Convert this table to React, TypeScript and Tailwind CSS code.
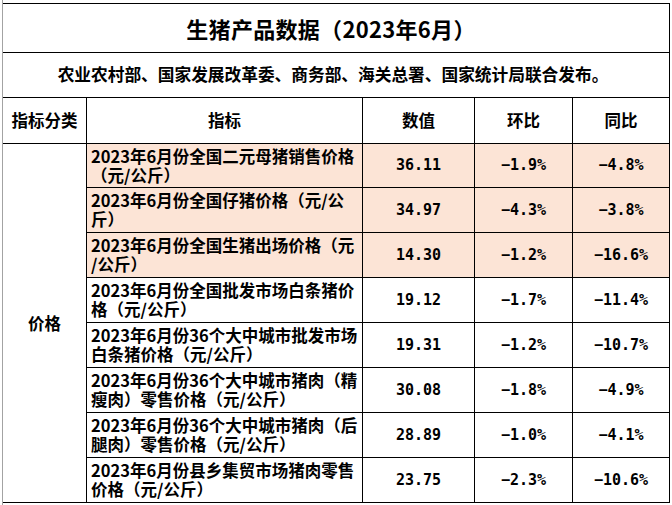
const CN = "font-['Noto_Sans_CJK_SC','Noto_Sans',sans-serif] font-bold text-black";
const NUM = "font-['DejaVu_Sans_Mono','Liberation_Mono',monospace] font-bold text-black";

const ROWS = [
  { lines: ["2023年6月份全国二元母猪销售价格", "（元/公斤）"], value: "36.11", mom: "−1.9%", yoy: "−4.8%", hl: true },
  { lines: ["2023年6月份全国仔猪价格（元/公", "斤）"], value: "34.97", mom: "−4.3%", yoy: "−3.8%", hl: true },
  { lines: ["2023年6月份全国生猪出场价格（元", "/公斤）"], value: "14.30", mom: "−1.2%", yoy: "−16.6%", hl: true },
  { lines: ["2023年6月份全国批发市场白条猪价", "格（元/公斤）"], value: "19.12", mom: "−1.7%", yoy: "−11.4%" },
  { lines: ["2023年6月份36个大中城市批发市场", "白条猪价格（元/公斤）"], value: "19.31", mom: "−1.2%", yoy: "−10.7%" },
  { lines: ["2023年6月份36个大中城市猪肉（精", "瘦肉）零售价格（元/公斤）"], value: "30.08", mom: "−1.8%", yoy: "−4.9%" },
  { lines: ["2023年6月份36个大中城市猪肉（后", "腿肉）零售价格（元/公斤）"], value: "28.89", mom: "−1.0%", yoy: "−4.1%" },
  { lines: ["2023年6月份县乡集贸市场猪肉零售", "价格（元/公斤）"], value: "23.75", mom: "−2.3%", yoy: "−10.6%" },
];

const cell = "border-r border-b border-black flex items-center justify-center";

export default function App() {
  return (
    <div className="w-[672px] h-[505px] bg-white overflow-hidden pl-[2px]">
      <div className="h-full border-l border-[#a3a3a3] pt-[3px]">
        <div className="grid grid-cols-[84px_276px_112px_98px_97px] grid-rows-[49px_45px_46px_44px_45px_45px_45px_45px_45px_45px_45px] border-t border-black w-[667px]">
          <div className={`col-span-5 ${cell} pr-[10px] ${CN} text-[22px] tracking-[0.3px]`}>生猪产品数据（2023年6月）</div>
          <div className={`col-span-5 ${cell} pr-[6px] ${CN} text-[16.7px]`}>农业农村部、国家发展改革委、商务部、海关总署、国家统计局联合发布。</div>

          <div className={`${cell} ${CN} text-[16.5px]`}>指标分类</div>
          <div className={`${cell} ${CN} text-[16.5px]`}>指标</div>
          <div className={`${cell} ${CN} text-[16.5px]`}>数值</div>
          <div className={`${cell} ${CN} text-[16.5px]`}>环比</div>
          <div className={`${cell} ${CN} text-[16.5px]`}>同比</div>

          <div className={`row-span-8 ${cell} ${CN} text-[16.5px]`}>价格</div>
          {ROWS.map((r, i) => (
            <Row key={i} {...r} />
          ))}
        </div>
      </div>
    </div>
  );
}

function Row({ lines, value, mom, yoy, hl }: { lines: string[]; value: string; mom: string; yoy: string; hl?: boolean }) {
  const bg = hl ? "bg-[#fce4d6]" : "bg-white";
  return (
    <>
      <div className={`border-r border-b border-black flex flex-col justify-center pl-[4px] whitespace-nowrap ${bg} ${CN} text-[16.5px] leading-[19px]`}>
        {lines.map((l) => <span key={l}>{l}</span>)}
      </div>
      <div className={`${cell} ${bg} ${NUM} text-[15px]`}>{value}</div>
      <div className={`${cell} ${bg} ${NUM} text-[15px]`}>{mom}</div>
      <div className={`${cell} ${bg} ${NUM} text-[15px]`}>{yoy}</div>
    </>
  );
}
